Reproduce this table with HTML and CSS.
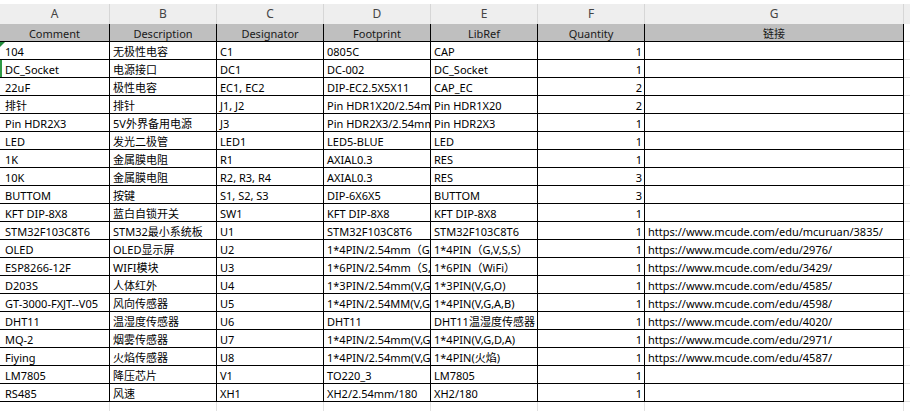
FILE: index.html
```html
<!DOCTYPE html>
<html lang="zh-CN">
<head>
<meta charset="utf-8">
<title>BOM</title>
<link rel="stylesheet" href="styles.css">
</head>
<body>
<div class="sheet">
  <div class="letters">
    <div class="lc ca">A</div><div class="lc cb">B</div><div class="lc cc">C</div><div class="lc cd">D</div><div class="lc ce">E</div><div class="lc cf">F</div><div class="lc cg">G</div><div class="lc fill"></div>
  </div>
  <div class="row head">
    <div class="c ca">Comment</div><div class="c cb">Description</div><div class="c cc">Designator</div><div class="c cd">Footprint</div><div class="c ce">LibRef</div><div class="c cf">Quantity</div><div class="c cg">链接</div><div class="c fill"></div>
  </div>
  <div class="row">
    <div class="c ca flag">104</div><div class="c cb">无极性电容</div><div class="c cc">C1</div><div class="c cd">0805C</div><div class="c ce">CAP</div><div class="c cf">1</div><div class="c cg"></div><div class="c fill"></div>
  </div>
  <div class="row">
    <div class="c ca sel">DC_Socket</div><div class="c cb">电源接口</div><div class="c cc">DC1</div><div class="c cd">DC-002</div><div class="c ce">DC_Socket</div><div class="c cf">1</div><div class="c cg"></div><div class="c fill"></div>
  </div>
  <div class="row">
    <div class="c ca">22uF</div><div class="c cb">极性电容</div><div class="c cc">EC1, EC2</div><div class="c cd">DIP-EC2.5X5X11</div><div class="c ce">CAP_EC</div><div class="c cf">2</div><div class="c cg"></div><div class="c fill"></div>
  </div>
  <div class="row">
    <div class="c ca">排针</div><div class="c cb">排针</div><div class="c cc">J1, J2</div><div class="c cd">Pin HDR1X20/2.54mm</div><div class="c ce">Pin HDR1X20</div><div class="c cf">2</div><div class="c cg"></div><div class="c fill"></div>
  </div>
  <div class="row">
    <div class="c ca">Pin HDR2X3</div><div class="c cb">5V外界备用电源</div><div class="c cc">J3</div><div class="c cd">Pin HDR2X3/2.54mm</div><div class="c ce">Pin HDR2X3</div><div class="c cf">1</div><div class="c cg"></div><div class="c fill"></div>
  </div>
  <div class="row">
    <div class="c ca">LED</div><div class="c cb">发光二极管</div><div class="c cc">LED1</div><div class="c cd">LED5-BLUE</div><div class="c ce">LED</div><div class="c cf">1</div><div class="c cg"></div><div class="c fill"></div>
  </div>
  <div class="row">
    <div class="c ca">1K</div><div class="c cb">金属膜电阻</div><div class="c cc">R1</div><div class="c cd">AXIAL0.3</div><div class="c ce">RES</div><div class="c cf">1</div><div class="c cg"></div><div class="c fill"></div>
  </div>
  <div class="row">
    <div class="c ca">10K</div><div class="c cb">金属膜电阻</div><div class="c cc">R2, R3, R4</div><div class="c cd">AXIAL0.3</div><div class="c ce">RES</div><div class="c cf">3</div><div class="c cg"></div><div class="c fill"></div>
  </div>
  <div class="row">
    <div class="c ca">BUTTOM</div><div class="c cb">按键</div><div class="c cc">S1, S2, S3</div><div class="c cd">DIP-6X6X5</div><div class="c ce">BUTTOM</div><div class="c cf">3</div><div class="c cg"></div><div class="c fill"></div>
  </div>
  <div class="row">
    <div class="c ca">KFT DIP-8X8</div><div class="c cb">蓝白自锁开关</div><div class="c cc">SW1</div><div class="c cd">KFT DIP-8X8</div><div class="c ce">KFT DIP-8X8</div><div class="c cf">1</div><div class="c cg"></div><div class="c fill"></div>
  </div>
  <div class="row">
    <div class="c ca">STM32F103C8T6</div><div class="c cb">STM32最小系统板</div><div class="c cc">U1</div><div class="c cd">STM32F103C8T6</div><div class="c ce">STM32F103C8T6</div><div class="c cf">1</div><div class="c cg">https://www.mcude.com/edu/mcuruan/3835/</div><div class="c fill"></div>
  </div>
  <div class="row">
    <div class="c ca">OLED</div><div class="c cb">OLED显示屏</div><div class="c cc">U2</div><div class="c cd">1*4PIN/2.54mm（G,V,S,S）</div><div class="c ce">1*4PIN（G,V,S,S）</div><div class="c cf">1</div><div class="c cg">https://www.mcude.com/edu/2976/</div><div class="c fill"></div>
  </div>
  <div class="row">
    <div class="c ca">ESP8266-12F</div><div class="c cb">WIFI模块</div><div class="c cc">U3</div><div class="c cd">1*6PIN/2.54mm（S,R,T,V,G）</div><div class="c ce">1*6PIN（WiFi）</div><div class="c cf">1</div><div class="c cg">https://www.mcude.com/edu/3429/</div><div class="c fill"></div>
  </div>
  <div class="row">
    <div class="c ca">D203S</div><div class="c cb">人体红外</div><div class="c cc">U4</div><div class="c cd">1*3PIN/2.54mm(V,G,O)</div><div class="c ce">1*3PIN(V,G,O)</div><div class="c cf">1</div><div class="c cg">https://www.mcude.com/edu/4585/</div><div class="c fill"></div>
  </div>
  <div class="row">
    <div class="c ca">GT-3000-FXJT--V05</div><div class="c cb">风向传感器</div><div class="c cc">U5</div><div class="c cd">1*4PIN/2.54MM(V,G,A,B)</div><div class="c ce">1*4PIN(V,G,A,B)</div><div class="c cf">1</div><div class="c cg">https://www.mcude.com/edu/4598/</div><div class="c fill"></div>
  </div>
  <div class="row">
    <div class="c ca">DHT11</div><div class="c cb">温湿度传感器</div><div class="c cc">U6</div><div class="c cd">DHT11</div><div class="c ce">DHT11温湿度传感器</div><div class="c cf">1</div><div class="c cg">https://www.mcude.com/edu/4020/</div><div class="c fill"></div>
  </div>
  <div class="row">
    <div class="c ca">MQ-2</div><div class="c cb">烟雾传感器</div><div class="c cc">U7</div><div class="c cd">1*4PIN/2.54mm(V,G,D,A)</div><div class="c ce">1*4PIN(V,G,D,A)</div><div class="c cf">1</div><div class="c cg">https://www.mcude.com/edu/2971/</div><div class="c fill"></div>
  </div>
  <div class="row">
    <div class="c ca">Fiying</div><div class="c cb">火焰传感器</div><div class="c cc">U8</div><div class="c cd">1*4PIN/2.54mm(V,G,D,A)</div><div class="c ce">1*4PIN(火焰)</div><div class="c cf">1</div><div class="c cg">https://www.mcude.com/edu/4587/</div><div class="c fill"></div>
  </div>
  <div class="row">
    <div class="c ca">LM7805</div><div class="c cb">降压芯片</div><div class="c cc">V1</div><div class="c cd">TO220_3</div><div class="c ce">LM7805</div><div class="c cf">1</div><div class="c cg"></div><div class="c fill"></div>
  </div>
  <div class="row">
    <div class="c ca">RS485</div><div class="c cb">风速</div><div class="c cc">XH1</div><div class="c cd">XH2/2.54mm/180</div><div class="c ce">XH2/180</div><div class="c cf">1</div><div class="c cg"></div><div class="c fill"></div>
  </div>
  <div class="row empty">
    <div class="c ca"></div><div class="c cb"></div><div class="c cc"></div><div class="c cd"></div><div class="c ce"></div><div class="c cf"></div><div class="c cg"></div><div class="c fill"></div>
  </div>
</div>
</body>
</html>
```

FILE: styles.css
```css
html, body {
  margin: 0;
  padding: 0;
  background: #ffffff;
}

.sheet {
  width: 910px;
  height: 411px;
  overflow: hidden;
  font-family: "Noto Sans", "Noto Sans CJK SC", sans-serif;
  font-size: 11px;
  color: #000000;
  padding-top: 4px;
  box-sizing: border-box;
}

.letters {
  display: flex;
  height: 20px;
  background: #eeeeee;
}

.lc {
  box-sizing: border-box;
  height: 20px;
  line-height: 20px;
  text-align: center;
  color: #444444;
  font-size: 12px;
  border-right: 1px solid #d6d6d6;
}

.lc.fill {
  border-right: none;
}

.row {
  display: flex;
  height: 18px;
}

.c {
  box-sizing: border-box;
  height: 18px;
  line-height: 17px;
  padding: 1px 2px 0 3px;
  border-right: 1px solid #000000;
  border-bottom: 1px solid #000000;
  white-space: nowrap;
  overflow: hidden;
  position: relative;
}

.ca { width: 110px; flex: none; }
.cb { width: 107px; flex: none; }
.cc { width: 107px; flex: none; }
.cd { width: 107px; flex: none; }
.ce { width: 107px; flex: none; }
.cf { width: 107px; flex: none; }
.cg { width: 259px; flex: none; }
.fill { flex: 1; }

.c.ca {
  padding-left: 5px;
}

.c.cf {
  text-align: right;
  padding-right: 2px;
}

.c.fill {
  border-right: none;
  border-bottom: 1px solid #e1e1e1;
}

.head .c {
  background: #bfbfbf;
  text-align: center;
  color: #1a1a1a;
  padding-left: 0;
  padding-right: 0;
}

.head .c.fill {
  background: #ffffff;
}

.empty .c {
  border-right: 1px solid #e1e1e1;
  border-bottom: 1px solid #e1e1e1;
}

.empty .c.fill {
  border-right: none;
}

.flag::before {
  content: "";
  position: absolute;
  left: 0;
  top: 0;
  width: 0;
  height: 0;
  border-top: 5px solid #1f8a3a;
  border-right: 5px solid transparent;
}

.sel {
  box-shadow: inset 2px 0 0 #2f9a45;
}
```
